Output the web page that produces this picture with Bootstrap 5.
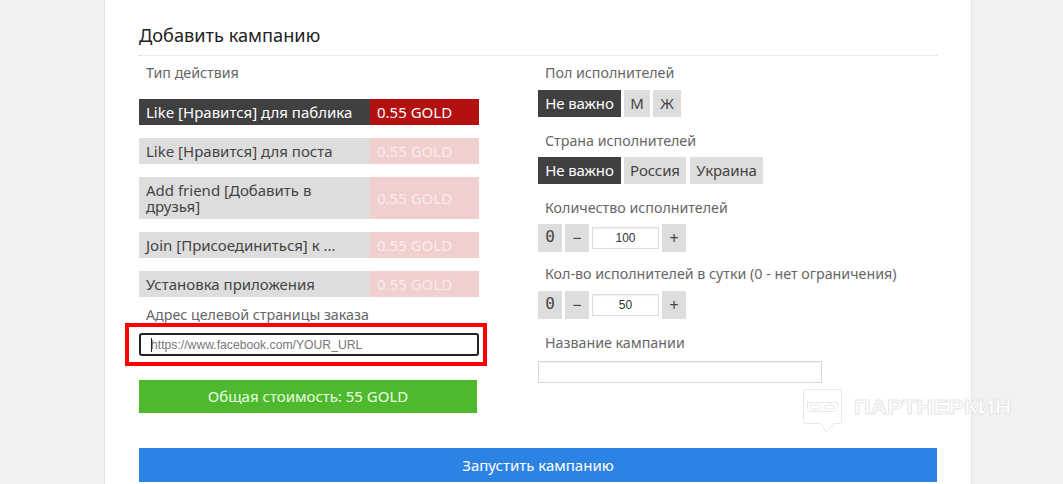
<!DOCTYPE html>
<html lang="ru">
<head>
<meta charset="utf-8">
<title>Добавить кампанию</title>
<link rel="stylesheet" href="https://cdn.jsdelivr.net/npm/bootstrap@5.3.0/dist/css/bootstrap.min.css">
<style>
html,body{height:484px;overflow:hidden}
body{background:#f1f1f1;font-family:"Noto Sans","DejaVu Sans",sans-serif;position:relative;color:#444}
.sheet{position:absolute;left:104px;top:0;width:868px;height:484px;background:#fff;border-left:1px solid #e2e2e2;border-right:1px solid #e2e2e2;padding:0 34px}
.sheet-title{font-size:18.2px;font-weight:400;color:#222;line-height:22px;margin:24px 0 0;padding-bottom:9px;border-bottom:1px dotted #d4d4d4}
.cols{gap:59px}
.col-left{width:340px}
.col-right{width:400px}
.lbl{font-size:14.25px;line-height:18px;color:#666;padding-left:7px}
.lbl-first{margin:8px 0 17px}
.lbl-top{margin:8px 0 8px}
.lbl-mid{margin:15px 0 7px}
.lbl-day{margin:13px 0 8px}
.lbl-name{margin:15px 0 0}
.lbl-url{margin:9px 0 0}
.act{display:flex;margin-bottom:13px;font-size:15px;line-height:16px}
.act-last{margin-bottom:0}
.act-name{width:231px;background:#ddd;color:#444;padding:5px 7px;display:flex;align-items:center;min-height:26px}
.act-price{width:109px;background:#f0cfcf;color:#fbeaea;padding:0 7px;display:flex;align-items:center}
.act.on .act-name{background:#404040;color:#fff}
.act.on .act-price{background:#b31010;color:#fff}
.opt{background:#ddd;color:#444;font-size:15px;height:27px;line-height:27px;text-align:center;border:0;border-radius:0;letter-spacing:-.1px}
.opt.on{background:#404040;color:#fff}
.w-any{width:83px}.w-m{width:26px}.w-zh{width:28px}.w-ru{width:62px;margin-right:1px}.w-ua{width:73px}
.opts{gap:3px}
.num{height:28px;line-height:28px;width:24px;padding:0;text-align:center;background:#ddd;color:#444;font-size:16px}
.num.zero{font-family:"DejaVu Sans Mono",monospace;font-size:16px;line-height:26px}
.num-in{width:67px;height:22px;border:1px solid #ddd;box-shadow:inset 0 1px 2px #eee;background:#fff;text-align:center;font:12px "Liberation Sans",sans-serif;color:#333;padding:0;border-radius:0;outline:0}
.url-box{position:relative;margin-top:9px}
.url-in{width:340px;height:23px;border:2px solid #222;border-radius:3px;font:12.2px "Liberation Sans",sans-serif;padding:0 10px;display:block}
.url-in::placeholder{color:#777}
.caret-bar{position:absolute;left:12px;top:5px;width:1px;height:14px;background:#222}
.name-in{width:284px;height:22px;border:1px solid #d8d8d8;box-shadow:inset 0 1px 2px #eee;display:block;margin-top:9px;padding:0}
.red-frame{position:absolute;left:125px;top:323px;width:362px;height:43px;border:4px solid #f00;pointer-events:none}
.total{width:338px;height:33px;line-height:33px;background:#4eb92f;color:#e9ffe0;text-align:center;font-size:15px;margin-top:24px}
.launch{display:block;width:798px;height:34px;background:#2b83e4;color:#fff;text-align:center;font-size:15px;line-height:34px;position:absolute;left:34px;top:448px;border:0;padding:0;border-radius:0}
.mark-wm{position:absolute;left:802px;top:388px;display:flex;align-items:flex-start;gap:11px;pointer-events:none}
.mark-wm span{display:block;font:700 21px/1 "Liberation Sans",sans-serif;color:#fff;-webkit-text-stroke:1px #e6e6e6;margin-top:8px;transform:scaleX(1.1);transform-origin:left top}
</style>
</head>
<body>
<div class="sheet">
  <h2 class="sheet-title">Добавить кампанию</h2>
  <div class="d-flex cols">
    <div class="col-left">
      <div class="lbl lbl-first">Тип действия</div>
      <div class="act on"><div class="act-name">Like [Нравится] для паблика</div><div class="act-price">0.55 GOLD</div></div>
      <div class="act"><div class="act-name">Like [Нравится] для поста</div><div class="act-price">0.55 GOLD</div></div>
      <div class="act"><div class="act-name">Add friend [Добавить в друзья]</div><div class="act-price">0.55 GOLD</div></div>
      <div class="act"><div class="act-name">Join [Присоединиться] к ...</div><div class="act-price">0.55 GOLD</div></div>
      <div class="act act-last"><div class="act-name">Установка приложения</div><div class="act-price">0.55 GOLD</div></div>
      <div class="lbl lbl-url">Адрес целевой страницы заказа</div>
      <div class="url-box"><input class="url-in" type="text" placeholder="https://www.facebook.com/YOUR_URL"><div class="caret-bar"></div></div>
      <div class="total">Общая стоимость: 55 GOLD</div>
    </div>
    <div class="col-right">
      <div class="lbl lbl-top">Пол исполнителей</div>
      <div class="d-flex opts"><div class="opt on w-any">Не важно</div><div class="opt w-m">М</div><div class="opt w-zh">Ж</div></div>
      <div class="lbl lbl-mid">Страна исполнителей</div>
      <div class="d-flex opts"><div class="opt on w-any">Не важно</div><div class="opt w-ru">Россия</div><div class="opt w-ua">Украина</div></div>
      <div class="lbl lbl-mid">Количество исполнителей</div>
      <div class="d-flex opts align-items-center"><div class="num zero">0</div><div class="num">−</div><input class="num-in" type="text" value="100"><div class="num">+</div></div>
      <div class="lbl lbl-day">Кол-во исполнителей в сутки (0 - нет ограничения)</div>
      <div class="d-flex opts align-items-center"><div class="num zero">0</div><div class="num">−</div><input class="num-in" type="text" value="50"><div class="num">+</div></div>
      <div class="lbl lbl-name">Название кампании</div>
      <input class="name-in" type="text">
    </div>
  </div>
  <button class="launch" type="button">Запустить кампанию</button>
</div>
<div class="red-frame"></div>
<div class="mark-wm">
  <svg width="41" height="45" viewBox="0 0 41 45" fill="none" stroke="#e8e8e8" stroke-width="1"><path d="M3.500 1.500H37a2.500 2.500 0 0 1 2.500 2.500V33a2.500 2.500 0 0 1-2.500 2.500H32L24 44 19 35.500H4a2.500 2.500 0 0 1-2.500-2.500V4A2.500 2.500 0 0 1 3.500 1.500Z"/><path d="M5.500 14.500H35.500V20.500A3 3 0 0 1 32.500 23.500H8.500A3 3 0 0 1 5.500 20.500Z"/><rect x="8" y="17" width="10" height="4" rx="2"/><rect x="22" y="17" width="11" height="4" rx="2"/></svg>
  <span>ПАРТНЕРКИН</span>
</div>
</body>
</html>
